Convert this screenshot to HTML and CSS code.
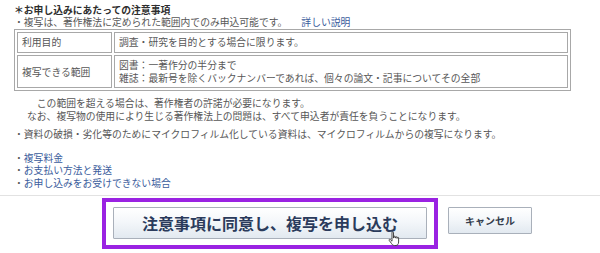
FILE: index.html
```html
<!DOCTYPE html>
<html lang="ja">
<head>
<meta charset="utf-8">
<title>注意事項</title>
<link rel="stylesheet" href="styles.css">
</head>
<body>
<div class="notice">
  <p class="title">＊お申し込みにあたっての注意事項</p>
  <p class="lead">・複写は、著作権法に定められた範囲内でのみ申込可能です。<a href="#" class="link more">詳しい説明</a></p>
  <table class="terms">
    <tr class="row-short">
      <td class="label">利用目的</td>
      <td>調査・研究を目的とする場合に限ります。</td>
    </tr>
    <tr class="row-tall">
      <td class="label">複写できる範囲</td>
      <td>図書：一著作分の半分まで<br>雑誌：最新号を除くバックナンバーであれば、個々の論文・記事についてその全部</td>
    </tr>
  </table>
  <p class="note">この範囲を超える場合は、著作権者の許諾が必要になります。<br>なお、複写物の使用により生じる著作権法上の問題は、すべて申込者が責任を負うことになります。</p>
  <p class="bullet">・資料の破損・劣化等のためにマイクロフィルム化している資料は、マイクロフィルムからの複写になります。</p>
  <ul class="links">
    <li>・<a href="#" class="link">複写料金</a></li>
    <li>・<a href="#" class="link">お支払い方法と発送</a></li>
    <li>・<a href="#" class="link">お申し込みをお受けできない場合</a></li>
  </ul>
</div>
<div class="divider"></div>
<div class="actions">
  <div class="highlight">
    <button class="btn primary">注意事項に同意し、複写を申し込む</button>
  </div>
  <button class="btn cancel">キャンセル</button>
  <svg class="cursor" width="14" height="16" viewBox="0 0 14 16">
    <path d="M4 1.5c0-.8 1.5-.8 1.5 0V7h.3V5.8c0-.8 1.4-.8 1.4 0V7h.3V6.3c0-.8 1.4-.8 1.4 0V7.3h.3v-.5c0-.8 1.4-.8 1.4 0V11c0 2-1 3.5-2.6 3.5H6.3C5 14.5 4.3 13.6 3.5 12.5L1.2 9.4c-.5-.7.4-1.5 1.1-.9L4 10.2z" fill="#fff" stroke="#333" stroke-width="0.9"/>
  </svg>
</div>
</body>
</html>
```
FILE: styles.css
```css
html, body {
  margin: 0;
  padding: 0;
  background: #ffffff;
}

body {
  font-family: "Noto Sans CJK JP", "Noto Sans", sans-serif;
  font-size: 9.8px;
  color: #575757;
  width: 600px;
  height: 253px;
  overflow: hidden;
}

.notice {
  padding: 4px 0 0 14px;
}

.title {
  margin: 0;
  font-weight: bold;
  color: #2e2e2e;
  line-height: 12px;
}

.lead {
  margin: 0;
  line-height: 13px;
}

.link {
  color: #3a5c9c;
  text-decoration: none;
}

.more {
  margin-left: 14px;
}

.terms {
  width: 557px;
  border: 1px solid #a8a8a8;
  border-spacing: 2px;
  border-collapse: separate;
  font-size: 9.8px;
  color: #575757;
}

.terms td {
  border: 1px solid #a8a8a8;
  padding: 0 4px;
  line-height: 13px;
  vertical-align: middle;
}

.terms td.label {
  width: 85px;
}

.row-short td {
  padding-top: 3px;
  padding-bottom: 3px;
}

.row-tall td {
  padding-top: 3px;
  padding-bottom: 2px;
}

.note {
  margin: 6px 0 0 0;
  padding-left: 13px;
  line-height: 13px;
  text-indent: 1em;
}

.bullet {
  margin: 5px 0 0 0;
  line-height: 13px;
}

.links {
  list-style: none;
  margin: 11px 0 0 0;
  padding: 0;
  line-height: 12.3px;
}

.divider {
  margin-top: 6px;
  height: 1px;
  background: #e2e2e2;
}

.actions {
  position: relative;
  display: flex;
  align-items: flex-start;
  margin-top: 2px;
  padding-left: 102px;
}

.highlight {
  display: flex;
  border: 4px solid #9a22e2;
  padding: 5px 7px 6px 7px;
}

.btn {
  font-family: "Noto Sans CJK JP", "Noto Sans", sans-serif;
  font-weight: bold;
  border: 1px solid #a9b0ba;
  background: linear-gradient(#ffffff 0%, #f4f7fa 45%, #e2e9f0 100%);
  color: #2b3b5c;
  padding: 0;
  margin: 0;
  border-radius: 1px;
}

.primary {
  width: 314px;
  height: 32px;
  font-size: 16px;
  line-height: 30px;
}

.cancel {
  width: 84px;
  height: 27px;
  margin: 9px 0 0 10px;
  font-size: 10px;
  line-height: 25px;
  color: #333c4c;
}

.cursor {
  position: absolute;
  left: 388px;
  top: 33px;
}
```
